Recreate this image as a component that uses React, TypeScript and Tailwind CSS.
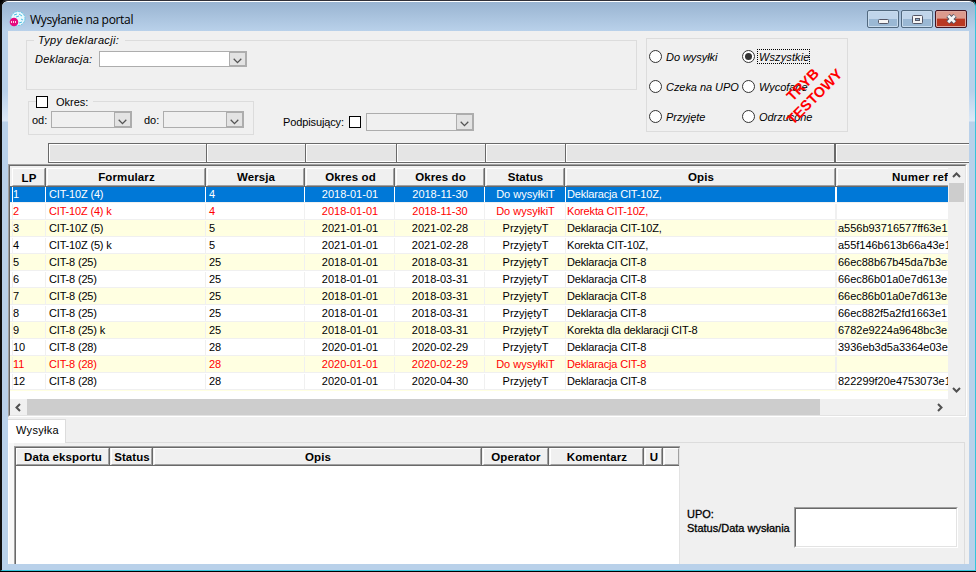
import type { ReactNode } from "react"

type Row = {
  lp: number
  form: string
  version: string
  from: string
  to: string
  status: string
  desc: string
  ref: string
  red?: boolean
}

const rows: Row[] = [
  { lp: 1, form: "CIT-10Z (4)", version: "4", from: "2018-01-01", to: "2018-11-30", status: "Do wysyłkiT", desc: "Deklaracja CIT-10Z,", ref: "" },
  { lp: 2, form: "CIT-10Z (4) k", version: "4", from: "2018-01-01", to: "2018-11-30", status: "Do wysyłkiT", desc: "Korekta CIT-10Z,", ref: "", red: true },
  { lp: 3, form: "CIT-10Z (5)", version: "5", from: "2021-01-01", to: "2021-02-28", status: "PrzyjętyT", desc: "Deklaracja CIT-10Z,", ref: "a556b93716577ff63e1" },
  { lp: 4, form: "CIT-10Z (5) k", version: "5", from: "2021-01-01", to: "2021-02-28", status: "PrzyjętyT", desc: "Korekta CIT-10Z,", ref: "a55f146b613b66a43e1" },
  { lp: 5, form: "CIT-8 (25)", version: "25", from: "2018-01-01", to: "2018-03-31", status: "PrzyjętyT", desc: "Deklaracja CIT-8", ref: "66ec88b67b45da7b3e1" },
  { lp: 6, form: "CIT-8 (25)", version: "25", from: "2018-01-01", to: "2018-03-31", status: "PrzyjętyT", desc: "Deklaracja CIT-8", ref: "66ec86b01a0e7d613e1" },
  { lp: 7, form: "CIT-8 (25)", version: "25", from: "2018-01-01", to: "2018-03-31", status: "PrzyjętyT", desc: "Deklaracja CIT-8", ref: "66ec86b01a0e7d613e1" },
  { lp: 8, form: "CIT-8 (25)", version: "25", from: "2018-01-01", to: "2018-03-31", status: "PrzyjętyT", desc: "Deklaracja CIT-8", ref: "66ec882f5a2fd1663e1" },
  { lp: 9, form: "CIT-8 (25) k", version: "25", from: "2018-01-01", to: "2018-03-31", status: "PrzyjętyT", desc: "Korekta dla deklaracji CIT-8", ref: "6782e9224a9648bc3e1" },
  { lp: 10, form: "CIT-8 (28)", version: "28", from: "2020-01-01", to: "2020-02-29", status: "PrzyjętyT", desc: "Deklaracja CIT-8", ref: "3936eb3d5a3364e03e1" },
  { lp: 11, form: "CIT-8 (28)", version: "28", from: "2020-01-01", to: "2020-02-29", status: "Do wysyłkiT", desc: "Deklaracja CIT-8", ref: "", red: true },
  { lp: 12, form: "CIT-8 (28)", version: "28", from: "2020-01-01", to: "2020-04-30", status: "PrzyjętyT", desc: "Deklaracja CIT-8", ref: "822299f20e4753073e1" },
]

const gridCols = "grid grid-cols-[36px_160px_99px_90px_90px_80px_271px_112px]"

function Combo({ className, disabled }: { className: string; disabled?: boolean }) {
  return (
    <div className={`flex shrink-0 border border-[#adadad] ${disabled ? "bg-[#f0f0f0]" : "bg-white"} ${className}`}>
      <div className="flex-1" />
      <div className="flex w-[17px] items-center justify-center border border-[#adadad] bg-[#e3e3e3]">
        <svg width="9" height="6" viewBox="0 0 9 6" className="mt-[4px] shrink-0">
          <path d="M0.7 0.8 L4.5 4.6 L8.3 0.8" fill="none" stroke="#555" strokeWidth="1.3" />
        </svg>
      </div>
    </div>
  )
}

function CheckBox() {
  return <div className="h-3 w-3 shrink-0 border border-black bg-white" />
}

function Radio({ label, checked }: { label: string; checked?: boolean }) {
  return (
    <div className="flex h-[30px] items-center">
      <div className="flex h-[13px] w-[13px] shrink-0 items-center justify-center rounded-full border border-[#333] bg-white">
        {checked && <div className="h-[7px] w-[7px] rounded-full bg-[#333]" />}
      </div>
      <span
        className={`ml-[2px] h-[15px] border pl-px leading-[14px] whitespace-nowrap italic ${
          checked ? "border-dotted border-black tracking-[0.1px]" : "border-transparent tracking-[-0.05px]"
        }`}
      >
        {label}
      </span>
    </div>
  )
}

function HeaderCell({ children, className = "" }: { children?: ReactNode; className?: string }) {
  return (
    <div className={`border-r border-b border-[#696969] ${className}`}>
      <div className="flex h-full items-center justify-center overflow-hidden border border-t-white border-r-[#a0a0a0] border-b-[#a0a0a0] border-l-white bg-[#f0f0f0] pl-px font-bold tracking-[0.1px]">
        {children}
      </div>
    </div>
  )
}

function Chevron({ d, className = "" }: { d: string; className?: string }) {
  return (
    <svg width="9" height="9" viewBox="0 0 9 9" className={`shrink-0 ${className}`}>
      <path d={d} fill="none" stroke="#505050" strokeWidth="2" />
    </svg>
  )
}

function TitleBar() {
  return (
    <div className="flex h-[29px] shrink-0 items-start bg-linear-to-b from-[#99b4d1] to-[#b9d1ea]">
      <svg width="17" height="17" viewBox="0 0 17 17" className="mt-[9px] ml-[7px]">
        <circle cx="9" cy="7.5" r="7" fill="#e8f8fd" stroke="#62c9e8" strokeWidth="1" strokeDasharray="2 1" />
        <path d="M5 4 L8 3 M10 3 L13 5 M12 8 L14 9 M7 6 L10 5 M10 12 L13 11" stroke="#4cbfe4" strokeWidth="1" />
        <circle cx="5" cy="11" r="4.3" fill="#e5097f" />
        <path d="M2.5 10 v2 M4.5 10 v2 M6.5 10 v2" stroke="#ffd0e8" strokeWidth="1" />
      </svg>
      <span className="mt-[9px] ml-1 font-['Open_Sans',sans-serif] text-[12px] leading-[17px] tracking-[-0.33px]">
        Wysyłanie na portal
      </span>
      <div className="mt-2 mr-[8px] ml-auto flex gap-[2px]">
        <div className="flex h-[18px] w-8 items-center justify-center rounded-xs border border-[#51697f] bg-linear-to-b from-[#c0d5ea] from-50% to-[#9ab8d4] to-50% inset-shadow-[0_0_0_1px_#c8dbed]">
          <svg width="11" height="5" viewBox="0 0 11 5" className="mt-[4px]">
            <rect x="0.5" y="0.5" width="10" height="4" rx="1" fill="#f5f5f5" stroke="#535666" />
          </svg>
        </div>
        <div className="flex h-[18px] w-8 items-center justify-center rounded-xs border border-[#51697f] bg-linear-to-b from-[#c0d5ea] from-50% to-[#9ab8d4] to-50% inset-shadow-[0_0_0_1px_#c8dbed]">
          <svg width="11" height="9" viewBox="0 0 11 9">
            <rect x="0.5" y="0.5" width="10" height="8" rx="1" fill="#f5f5f5" stroke="#535666" />
            <rect x="3.5" y="3.5" width="4" height="2" fill="#8eaeca" stroke="#535666" />
          </svg>
        </div>
        <div className="flex h-[18px] w-8 items-center justify-center rounded-xs border border-[#431422] bg-linear-to-b from-[#dc9a8d] from-45% to-[#b93822] to-50% inset-shadow-[0_0_0_1px_#dda79e]">
          <svg width="13" height="10" viewBox="0 0 13 10">
            <path d="M3 1.5 L10 8.5 M10 1.5 L3 8.5" stroke="#535666" strokeWidth="4.6" />
            <path d="M3.2 1.7 L9.8 8.3 M9.8 1.7 L3.2 8.3" stroke="#f7f7f7" strokeWidth="2.8" />
          </svg>
        </div>
      </div>
    </div>
  )
}

function Filters() {
  return (
    <div className="flex h-[112px] shrink-0">
      <div className="w-[638px]">
        <div className="mt-[9px] ml-[18px] h-[50px] w-[611px] border border-[#dcdcdc]">
          <div className="-mt-[8px] ml-[7px] h-[14px] w-[91px] bg-[#f0f0f0] pl-1 leading-[14px] tracking-[0.35px] italic">
            Typy deklaracji:
          </div>
          <div className="mt-[4px] ml-[8px] flex h-4 items-center">
            <span className="w-[64px] tracking-[0.2px] italic">Deklaracja:</span>
            <Combo className="h-4 w-[148px]" />
          </div>
        </div>
        <div className="mt-[11px] flex">
          <div className="ml-5 h-[34px] w-[226px] border border-[#dcdcdc]">
            <div className="-mt-[7px] ml-[7px] flex h-[14px] w-[57px] items-center bg-[#f0f0f0]">
              <CheckBox />
              <span className="-mt-px ml-2">Okres:</span>
            </div>
            <div className="mt-[2px] ml-[3px] flex h-[17px] items-center">
              <span className="w-[19px]">od:</span>
              <Combo disabled className="h-[17px] w-[81px]" />
              <span className="ml-3 w-[19px]">do:</span>
              <Combo disabled className="h-[17px] w-[81px]" />
            </div>
          </div>
          <div className="mt-3 ml-[29px] flex h-[18px] items-center">
            <span className="w-[66px] tracking-[-0.12px]">Podpisujący:</span>
            <CheckBox />
            <Combo disabled className="ml-[5px] h-[18px] w-[108px]" />
          </div>
        </div>
      </div>
      <div className="relative mt-[7px] h-[94px] w-[202px] border border-[#dcdcdc] pt-[2px] pl-[2px]">
        <div className="grid grid-cols-[93px_100px]">
          <Radio label="Do wysyłki" />
          <Radio label="Wszystkie" checked />
          <Radio label="Czeka na UPO" />
          <Radio label="Wycofane" />
          <Radio label="Przyjęte" />
          <Radio label="Odrzucone" />
        </div>
        {/* stamp laid over the radio labels */}
        <div className="absolute top-[35px] left-[122px] w-[80px] -rotate-45 text-center text-[14.5px] leading-[17px] font-bold text-[#f00]">
          TRYB
          <br />
          TESTOWY
        </div>
      </div>
    </div>
  )
}

function FilterBar() {
  return (
    <div className="grid h-[20px] shrink-0 grid-cols-[158px_99px_91px_89px_80px_269px_135px] pl-10">
      {[0, 1, 2, 3, 4, 5, 6].map((i) => (
        <div key={i} className={`border-y border-[#696969] ${i === 6 ? "border-l-2" : "border-l"}`}>
          <div className="h-full border border-r-0 border-white bg-[#e5e5e5]" />
        </div>
      ))}
    </div>
  )
}

function DeclarationGrid() {
  return (
    <div className="mt-px flex h-[253px] w-[959px] shrink-0 flex-col border-t border-r border-b border-l border-t-[#a0a0a0] border-r-white border-b-white border-l-[#a0a0a0]">
      <div className="flex min-h-0 flex-1 flex-col border border-t-[#696969] border-r-[#e3e3e3] border-b-[#e3e3e3] border-l-[#696969]">
        <div className="flex h-[233px] shrink-0">
          <div className="w-[938px] overflow-hidden bg-white">
            <div className={`${gridCols} h-[20px] bg-[#f0f0f0] pt-[2px] text-[11.5px]`}>
              <HeaderCell className="pl-[2px]">
                <span className="pt-[2px]">LP</span>
              </HeaderCell>
              <HeaderCell className="pl-px">Formularz</HeaderCell>
              <HeaderCell className="pl-px">Wersja</HeaderCell>
              <HeaderCell className="pl-px">Okres od</HeaderCell>
              <HeaderCell className="pl-px">Okres do</HeaderCell>
              <HeaderCell className="pl-px">Status</HeaderCell>
              <HeaderCell className="pl-px">Opis</HeaderCell>
              <div className="border-b border-[#696969] pl-px">
                <div className="h-full border-t border-b border-l border-t-white border-b-[#a0a0a0] border-l-white pt-px pl-[54px] leading-[15px] font-bold tracking-[0.2px] whitespace-nowrap">
                  Numer ref
                </div>
              </div>
            </div>
            {rows.map((r, i) => {
              const selected = i === 0
              const line = `border-l ${selected ? "border-white" : "border-[#f0f0f0]"}`
              return (
                <div
                  key={r.lp}
                  className={`h-[17px] border-b border-[#f0f0f0] ${
                    selected ? "bg-[#0078d7] text-white" : i % 2 === 0 ? "bg-[#ffffe1]" : "bg-white"
                  } ${r.red ? "text-[#f00]" : ""}`}
                >
                  <div className={`${gridCols} h-4 py-px leading-[15px] whitespace-nowrap`}>
                    <div className={`ml-[2px] ${line}`}>{r.lp}</div>
                    <div className={`-ml-px pl-[3px] tracking-[-0.17px] ${line}`}>{r.form}</div>
                    <div className={`-ml-px pl-[3px] ${line}`}>{r.version}</div>
                    <div className={`-ml-px text-center ${line}`}>{r.from}</div>
                    <div className={`-ml-px text-center ${line}`}>{r.to}</div>
                    <div className={`-ml-px pl-px text-center ${line}`}>{r.status}</div>
                    <div className={`pl-px tracking-[-0.17px] ${line}`}>{r.desc}</div>
                    <div className={`-ml-px border-l-2 pl-px tracking-[-0.02px] ${selected ? "border-white" : "border-[#f0f0f0]"}`}>{r.ref}</div>
                  </div>
                </div>
              )
            })}
            <div className="h-px bg-[#ffffe1]" />
          </div>
          <div className="flex flex-1 flex-col items-center bg-[#f0f0f0]">
            <Chevron d="M1 6 L4.5 2.5 L8 6" className="mt-[5px]" />
            <div className="mt-[3px] h-[19px] w-[15px] bg-[#cdcdcd]" />
            <Chevron d="M1 3 L4.5 6.5 L8 3" className="mt-auto mb-[5px]" />
          </div>
        </div>
        <div className="flex flex-1 items-center bg-[#f0f0f0]">
          <Chevron d="M6 1 L2.5 4.5 L6 8" className="ml-[4px]" />
          <div className="ml-[4px] h-full w-[793px] bg-[#cdcdcd]" />
          <Chevron d="M3 1 L6.5 4.5 L3 8" className="ml-[115px]" />
        </div>
      </div>
    </div>
  )
}

function ShipmentPanel() {
  return (
    <div className="flex min-h-0 flex-1 flex-col pt-[2px]">
      <div className="flex h-[24px] shrink-0">
        <div className="w-[58px] border-t border-r border-[#dcdcdc] bg-white pt-[3px] pl-[8px] tracking-[0.3px]">
          Wysyłka
        </div>
        <div className="w-[899px] border-b border-[#dcdcdc]" />
      </div>
      <div className="flex min-h-0 w-[957px] flex-1 border-r border-l border-r-[#dcdcdc] border-l-white">
        <div className="w-[5px] bg-[#f8f8f8]" />
        <div className="mt-[3px] flex w-[666px] border-t border-l border-[#a0a0a0]">
          <div className="flex-1 border-t border-r border-l border-t-[#696969] border-r-[#e3e3e3] border-l-[#696969] bg-white">
            <div className="grid h-[18px] grid-cols-[94px_43px_329px_67px_95px_19px_16px] bg-[#f0f0f0] text-[11.5px]">
              <HeaderCell>Data eksportu</HeaderCell>
              <HeaderCell className="pl-px">Status</HeaderCell>
              <HeaderCell className="pl-px">Opis</HeaderCell>
              <HeaderCell className="pl-px">Operator</HeaderCell>
              <HeaderCell className="pl-px">Komentarz</HeaderCell>
              <HeaderCell className="pl-px">U</HeaderCell>
              <HeaderCell className="border-r-0 pl-px" />
            </div>
          </div>
        </div>
        <div className="flex flex-1 pt-[64px] pl-[7px]">
          <div className="w-[107px] leading-[14px] [-webkit-text-stroke:0.3px_black]">
            UPO:
            <br />
            Status/Data wysłania
          </div>
          <div className="h-[41px] w-[164px] border border-t-[#a0a0a0] border-r-white border-b-white border-l-[#a0a0a0]">
            <div className="h-full border border-t-[#696969] border-r-[#e3e3e3] border-b-[#e3e3e3] border-l-[#696969] bg-white" />
          </div>
        </div>
      </div>
    </div>
  )
}

export default function App() {
  return (
    <div className="h-[572px] w-[976px] overflow-hidden bg-black font-['Liberation_Sans',Arial,sans-serif] text-[11px] leading-[14px] text-black">
      <div className="flex h-[571px] flex-col rounded-t-md border-t border-r border-b border-l-2 border-t-[#303038] border-r-[#35c5dc] border-b-[#35c5dc] border-l-[#101010]">
        <div className="flex min-h-0 flex-1 flex-col overflow-hidden rounded-t-md border-t border-white bg-[#b9d1ea]">
          <TitleBar />
          <div className="flex min-h-0 flex-1 bg-linear-to-b from-[#b9d1ea] from-[60px] via-[#dce9f7] via-[90px] to-[#b9d1ea] to-[91px] px-[6px] pb-[6px]">
            <div className="flex w-[961px] flex-col overflow-hidden bg-[#f0f0f0]">
              <Filters />
              <FilterBar />
              <DeclarationGrid />
              <ShipmentPanel />
            </div>
          </div>
        </div>
      </div>
    </div>
  )
}
